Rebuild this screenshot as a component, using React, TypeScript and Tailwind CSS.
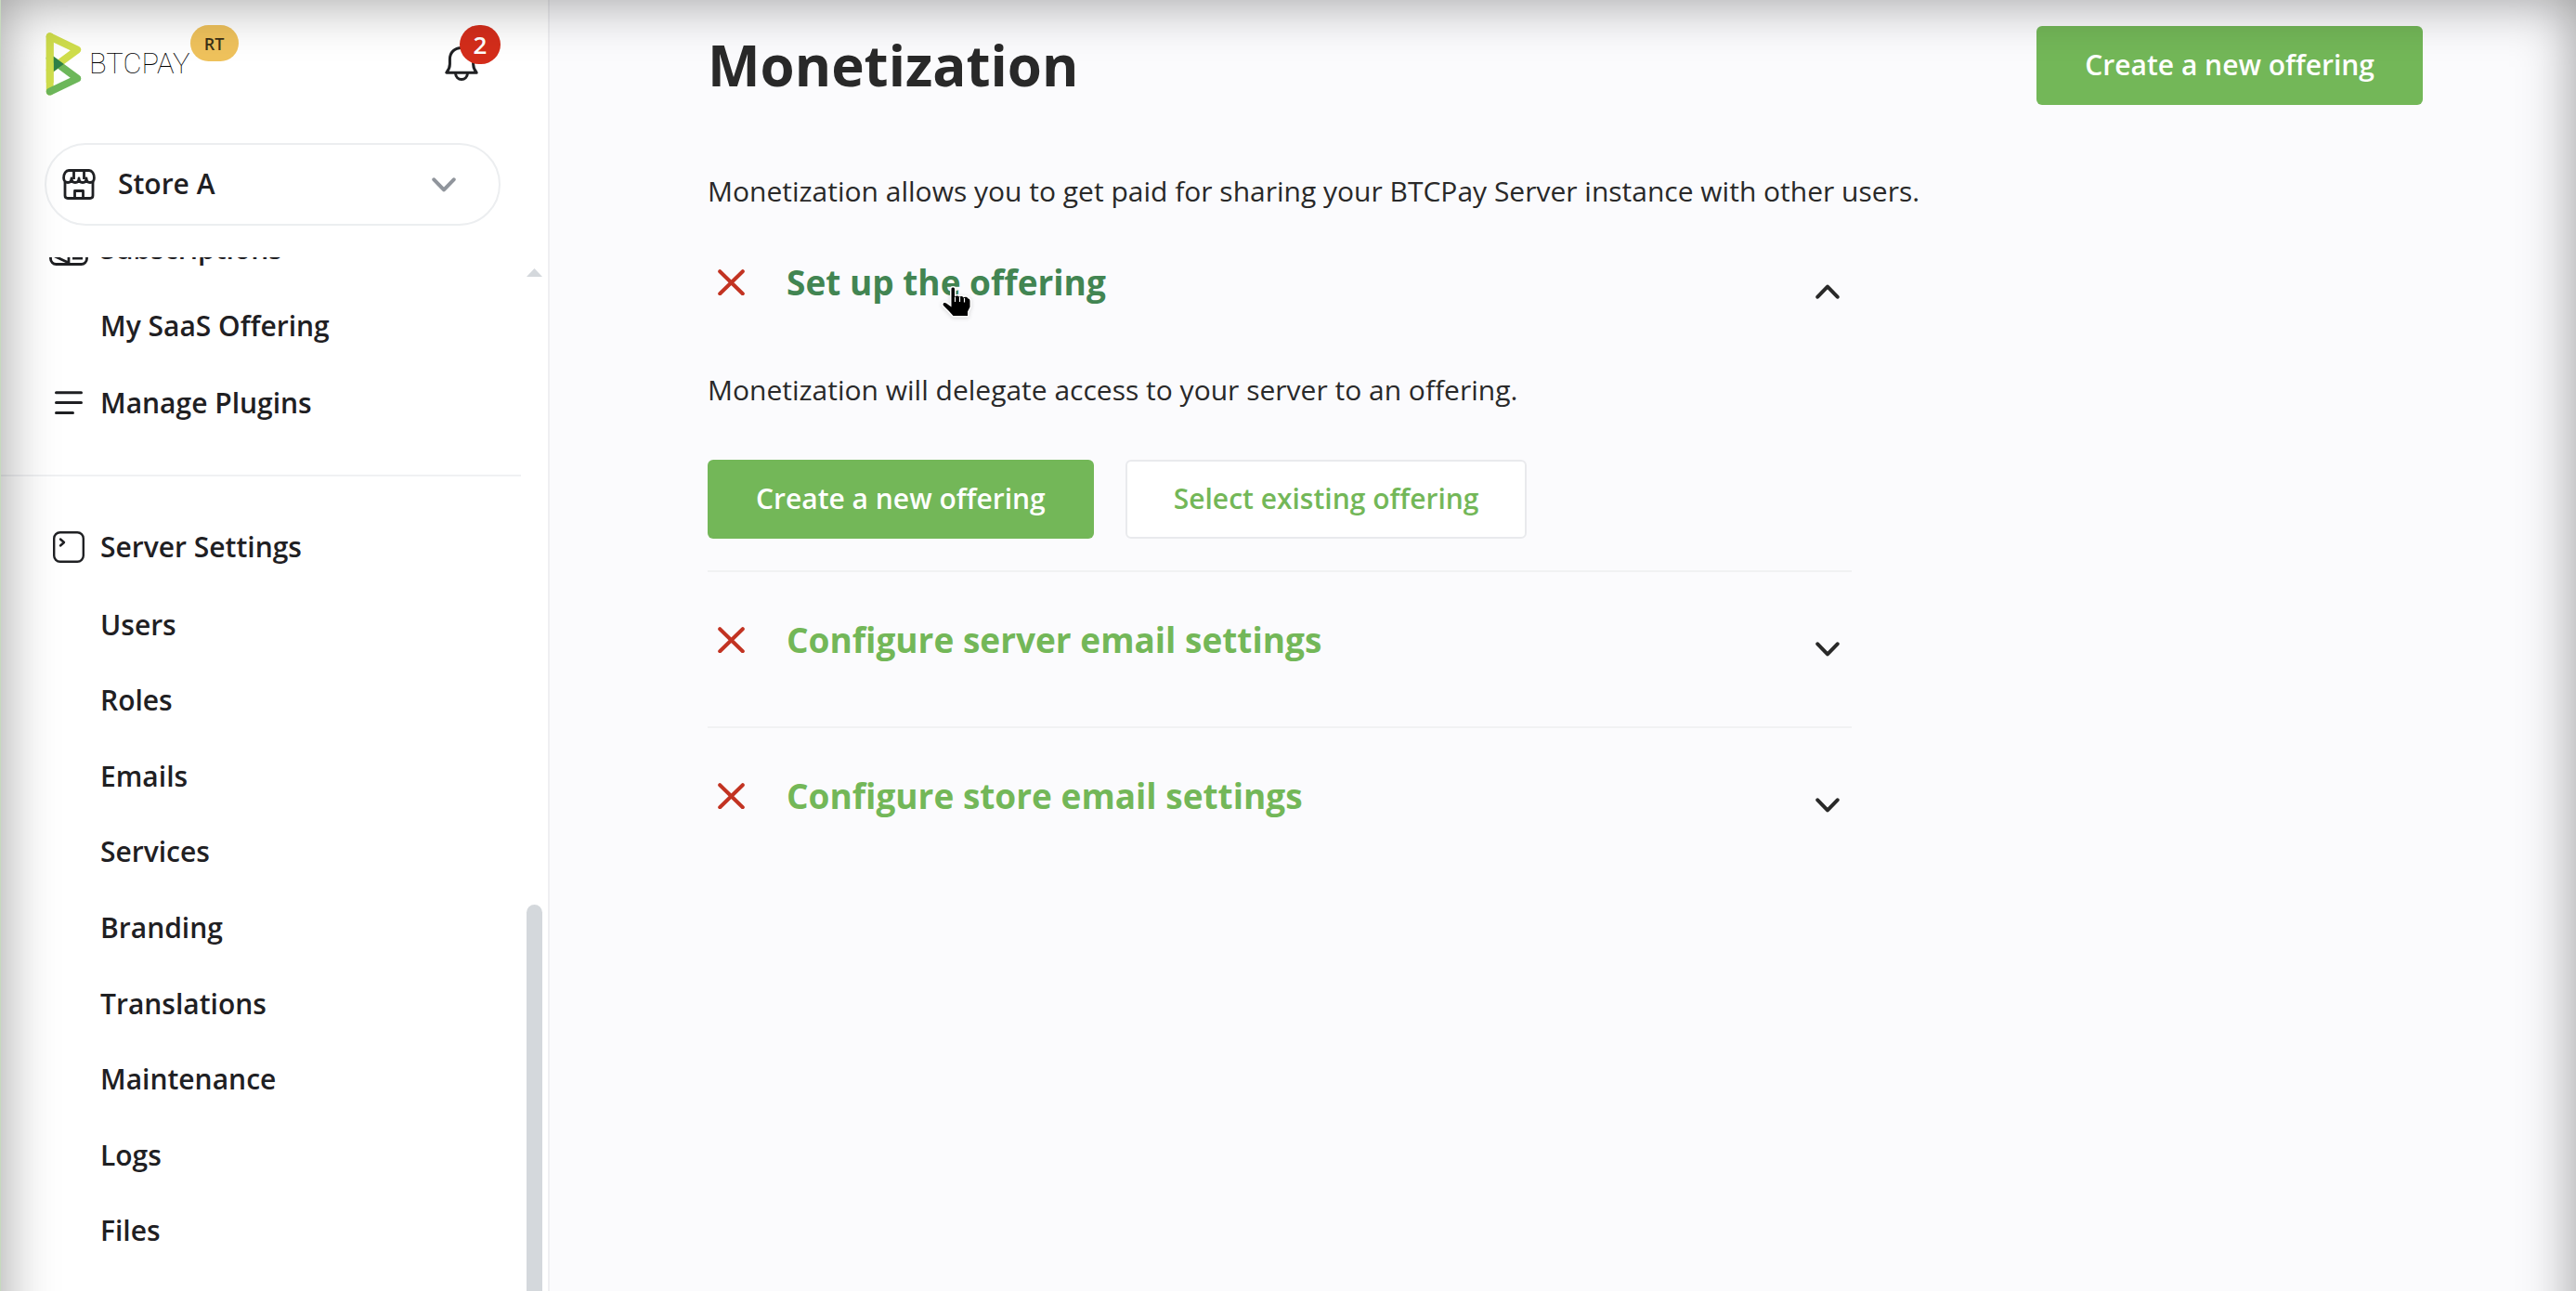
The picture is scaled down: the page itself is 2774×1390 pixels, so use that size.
import { useState, type ReactNode } from "react";

const serverLinks = [
  "Users",
  "Roles",
  "Emails",
  "Services",
  "Branding",
  "Translations",
  "Maintenance",
  "Logs",
  "Files",
];

function Logo() {
  return (
    <svg viewBox="0 0 47 84" className="h-[68px] w-[39px]" aria-hidden="true">
      <path
        d="M5.206 83.433a4.86 4.86 0 01-4.859-4.861V5.431a4.86 4.86 0 119.719 0v73.141a4.861 4.861 0 01-4.86 4.861"
        fill="#d0de4c"
      />
      <path
        d="M5.209 83.433a4.862 4.862 0 01-2.086-9.253L32.43 60.274 2.323 38.093a4.861 4.861 0 015.766-7.826l36.647 26.999a4.864 4.864 0 01-.799 8.306L7.289 82.964a4.866 4.866 0 01-2.08.469"
        fill="#6db75a"
      />
      <path
        d="M5.211 54.684a4.86 4.86 0 01-2.887-8.774L32.43 23.73 3.123 9.821a4.861 4.861 0 014.166-8.784l36.648 17.394a4.86 4.86 0 01.799 8.305l-36.647 27a4.844 4.844 0 01-2.878.948"
        fill="#d0de4c"
      />
      <path d="M10.066 31.725v20.553L24.01 42.006z" fill="#2f8148" />
      <path
        d="M10.066 5.431A4.861 4.861 0 005.206.57 4.86 4.86 0 00.347 5.431v61.165h9.72V5.431z"
        fill="#d0de4c"
      />
    </svg>
  );
}

function BellIcon() {
  return (
    <svg
      viewBox="0 0 36 37"
      className="h-[37px] w-9"
      fill="none"
      stroke="currentColor"
      strokeWidth="3"
      strokeLinejoin="round"
      strokeLinecap="round"
      aria-hidden="true"
    >
      <path d="M1.8 28.2h32.4c-2.6-3.2-3.6-5.4-3.6-9.2v-5C30.6 6.5 25.5 1.5 18 1.5S5.4 6.5 5.4 14v5c0 3.8-1 6-3.6 9.2z" />
      <path d="M11.5 29c.3 4 3 6.5 6.5 6.5s6.2-2.5 6.5-6.5" />
    </svg>
  );
}

function StoreIcon() {
  return (
    <svg
      viewBox="0 0 36 33"
      className="h-[33px] w-9"
      fill="none"
      stroke="currentColor"
      strokeWidth="2.8"
      strokeLinejoin="round"
      aria-hidden="true"
    >
      <path d="M7 1.5h22c3 0 5.400 3.500 5.400 8 0 3.200-1.800 5-4.400 5s-4-1.800-4-4.500c0 2.700-1.600 4.500-4 4.500s-4-1.800-4-4.500c0 2.700-1.600 4.500-4 4.500s-4-1.800-4-4.500c0 2.700-1.600 4.500-4 4.500s-4.400-1.800-4.400-5c0-4.500 2.400-8 5.400-8z" />
      <path d="M12.500 11V1.500M23.500 11V1.500" />
      <path d="M3 14v14.500c0 1.800 1.200 3 3 3h24c1.800 0 3-1.200 3-3V14" />
      <path d="M13.500 31v-7.500h9V31" />
    </svg>
  );
}

function SubscriptionsIcon() {
  return (
    <svg
      viewBox="0 0 42 36"
      className="h-9 w-[42px]"
      fill="none"
      stroke="currentColor"
      strokeWidth="2.8"
      strokeLinejoin="round"
      aria-hidden="true"
    >
      <rect x="1.5" y="1.5" width="39" height="33" rx="6" />
      <path d="M6 26l15 7V10M25 28h11" />
    </svg>
  );
}

function ListIcon() {
  return (
    <svg
      viewBox="0 0 30 26"
      className="h-[26px] w-[30px]"
      fill="none"
      stroke="currentColor"
      strokeWidth="3"
      strokeLinecap="round"
      aria-hidden="true"
    >
      <path d="M1.5 1.8h27M1.5 12.6h27M1.5 23.4h18" />
    </svg>
  );
}

function TerminalIcon() {
  return (
    <svg
      viewBox="0 0 34 34"
      className="size-[34px]"
      fill="none"
      stroke="currentColor"
      strokeWidth="2.4"
      strokeLinejoin="round"
      strokeLinecap="round"
      aria-hidden="true"
    >
      <rect x="1.2" y="1.2" width="31.6" height="31.6" rx="6.5" />
      <path d="M8 8.5l4 3.5-4 3.5" />
    </svg>
  );
}

function CrossIcon() {
  return (
    <svg
      viewBox="0 0 29 28"
      className="h-7 w-[29px] text-[#c23322]"
      fill="none"
      stroke="currentColor"
      strokeWidth="4"
      strokeLinecap="round"
      aria-hidden="true"
    >
      <path d="M2.2 2.2l24.6 24M26.8 2.2l-24.6 24" />
    </svg>
  );
}

function Chevron({ className }: { className: string }) {
  return (
    <svg
      viewBox="0 0 26 16"
      className={className}
      fill="none"
      stroke="currentColor"
      strokeWidth="4"
      strokeLinecap="round"
      strokeLinejoin="round"
      aria-hidden="true"
    >
      <path d="M2.3 2.3L13 13.4 23.7 2.3" />
    </svg>
  );
}

function HandCursor() {
  return (
    <svg
      viewBox="0 0 34 36"
      className="absolute top-[27px] left-[166px] h-9 w-[34px] drop-shadow-sm"
      aria-hidden="true"
    >
      <path
        d="M11.5 3c0-2 3.500-2 3.500 0v9c1-2 4.500-2 5 0 1-1.500 4-1.500 4.500.5 1-1.500 4.500-1 5 1 1.500 0 2 1 2 3v6l-2.500 5v4.500H13.500l-5-5.500L3 21c-1.500-2.500 1-4 3-2.500l5.500 4z"
        fill="#000"
        stroke="#fff"
        strokeWidth="3"
        strokeLinejoin="round"
        paintOrder="stroke"
      />
      <path d="M15.500 12v5M20.500 12v5M25.500 13v4.500" stroke="#fff" strokeWidth="1.200" />
    </svg>
  );
}

function NavItem({ icon, children }: { icon?: ReactNode; children: ReactNode }) {
  return (
    <li className="h-[83px]">
      <a href="#" className="flex h-full items-center gap-[13px] pl-[53px]">
        <span className="flex w-[42px] justify-center">{icon}</span>
        {children}
      </a>
    </li>
  );
}

function Sidebar() {
  return (
    <aside className="flex h-screen w-[592px] shrink-0 flex-col border-r-2 border-[#efeff2] bg-white font-semibold text-[#1f2023]">
      <div className="flex justify-between pt-[27px] pr-[51px] pl-[49px]">
        <a href="#" className="flex h-[76px] items-end">
          <Logo />
          <span className="ml-2 font-[Roboto] text-[31px] leading-[68px] font-thin text-black">
            BTCPAY
          </span>
          <span className="flex h-[39px] w-[52px] items-center justify-center self-start rounded-full bg-[#efc25c] text-lg font-semibold text-[#3b3016]">
            RT
          </span>
        </a>
        <button aria-label="Notifications" className="relative flex size-[60px] items-end">
          <BellIcon />
          <span className="absolute top-0 right-0 flex h-[42px] w-11 items-center justify-center rounded-full bg-[#d42d1b] text-[26px] font-semibold text-white">
            2
          </span>
        </button>
      </div>

      <button className="mt-[51px] mr-[51px] ml-12 flex h-[89px] shrink-0 items-center rounded-full border-2 border-[#eceef0] pr-[46px] pl-[17px]">
        <StoreIcon />
        <span className="ml-6 pb-0.5">Store A</span>
        <Chevron className="ml-auto h-4 w-[26px] text-[#90959c]" />
      </button>

      <div className="mt-[34px] flex min-h-0 flex-1">
        <nav className="flex-1 overflow-hidden">
          <ul className="-mt-[51px]">
            <NavItem icon={<SubscriptionsIcon />}>Subscriptions</NavItem>
            <NavItem>My SaaS Offering</NavItem>
            <NavItem icon={<ListIcon />}>Manage Plugins</NavItem>
          </ul>
          <hr className="mt-9 mb-[34px] border-t-2 border-[#f0f1f3]" />
          <ul>
            <NavItem icon={<TerminalIcon />}>Server Settings</NavItem>
          </ul>
          <ul className="mt-0.5 grid h-[734px] auto-rows-fr">
            {serverLinks.map((label) => (
              <li key={label} className="flex items-center pl-[108px]">
                <a href="#">{label}</a>
              </li>
            ))}
          </ul>
        </nav>
        {/* Scroll track */}
        <div className="mx-1.5 flex w-[17px] flex-col justify-between pt-3">
          <svg viewBox="0 0 17 9" className="h-[9px] w-[17px]" aria-hidden="true">
            <path d="M8.5 0L17 9H0z" fill="#d4d8dc" />
          </svg>
          <div className="h-[416px] rounded-t-full bg-[#d4d8dc]" />
        </div>
      </div>
    </aside>
  );
}

function PrimaryButton({ children }: { children: ReactNode }) {
  return (
    <button className="h-[85px] rounded-md bg-[#73b758] px-[52px] pb-0.5 font-semibold text-white">
      {children}
    </button>
  );
}

function Step({
  title,
  open,
  active,
  last,
  onToggle,
  children,
}: {
  title: string;
  open: boolean;
  active?: boolean;
  last?: boolean;
  onToggle: () => void;
  children?: ReactNode;
}) {
  return (
    <section className={last ? "" : "border-b-2 border-[#f1f2f3]"}>
      <h2>
        <button
          onClick={onToggle}
          aria-expanded={open}
          className="flex h-[166px] w-full items-center justify-between pr-[13px] pl-[11px]"
        >
          <span className="flex items-center gap-[45px] pb-5">
            <CrossIcon />
            <span
              className={
                active
                  ? "relative text-[37px] font-bold text-[#428552]"
                  : "text-[37px] font-bold text-[#73b758]"
              }
            >
              {title}
              {active && <HandCursor />}
            </span>
          </span>
          <Chevron
            className={
              open ? "h-4 w-[26px] rotate-180 text-[#292929]" : "h-4 w-[26px] text-[#292929]"
            }
          />
        </button>
      </h2>
      {open && children}
    </section>
  );
}

export default function App() {
  const [openStep, setOpenStep] = useState(0);
  const toggle = (step: number) => setOpenStep(openStep === step ? -1 : step);

  return (
    <div className="relative flex min-h-screen overflow-hidden bg-[#fbfbfd] font-['Open_Sans',sans-serif] text-[30px] leading-[46px] text-[#292929]">
      <Sidebar />

      <main className="flex-1 pt-7 pr-[165px] pl-[170px]">
        <header className="flex items-center justify-between">
          <h1 className="pb-0.5 text-[60px] leading-[80px] font-bold">Monetization</h1>
          <PrimaryButton>Create a new offering</PrimaryButton>
        </header>

        <p className="mt-[70px] mb-0.5">
          Monetization allows you to get paid for sharing your BTCPay Server instance with other
          users.
        </p>

        <div className="max-w-[1232px]">
          <Step title="Set up the offering" open={openStep === 0} active onToggle={() => toggle(0)}>
            <p>Monetization will delegate access to your server to an offering.</p>
            <div className="mt-[52px] flex gap-[34px] pb-[34px]">
              <PrimaryButton>Create a new offering</PrimaryButton>
              <button className="h-[85px] rounded-md border-2 border-[#e9eaed] bg-white px-[50px] pb-0.5 font-semibold text-[#73b758]">
                Select existing offering
              </button>
            </div>
          </Step>
          <Step
            title="Configure server email settings"
            open={openStep === 1}
            onToggle={() => toggle(1)}
          />
          <Step
            title="Configure store email settings"
            open={openStep === 2}
            last
            onToggle={() => toggle(2)}
          />
        </div>
      </main>

      {/* Soft shade along the top and the sides */}
      <div className="pointer-events-none absolute inset-x-0 top-0 -bottom-32 border-l border-[#c6dabd] shadow-[inset_0_0_60px_rgba(0,0,0,0.4)]" />
    </div>
  );
}
